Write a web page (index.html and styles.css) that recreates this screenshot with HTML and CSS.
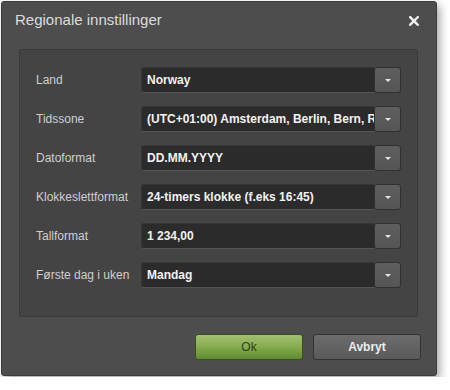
FILE: index.html
```html
<!DOCTYPE html>
<html lang="no">
<head>
    <meta charset="UTF-8">
    <title>Regionale innstillinger</title>
    <link rel="stylesheet" href="styles.css">
</head>
<body>
    <div class="dialog">
        <div class="dialog-header">
            <h1>Regionale innstillinger</h1>
            <svg class="close-btn" width="10" height="10" viewBox="0 0 10 10">
                <path d="M1.2 1.2 L8.8 8.8 M8.8 1.2 L1.2 8.8" stroke="#f0f0f0" stroke-width="2.4" stroke-linecap="square"/>
            </svg>
        </div>
        <div class="settings-panel">
            <div class="field-row">
                <label>Land</label>
                <div class="select"><span class="select-value">Norway</span><span class="select-btn"></span></div>
            </div>
            <div class="field-row">
                <label>Tidssone</label>
                <div class="select"><span class="select-value">(UTC+01:00) Amsterdam, Berlin, Bern, Roma, Stockholm, Wien</span><span class="select-btn"></span></div>
            </div>
            <div class="field-row">
                <label>Datoformat</label>
                <div class="select"><span class="select-value">DD.MM.YYYY</span><span class="select-btn"></span></div>
            </div>
            <div class="field-row">
                <label>Klokkeslettformat</label>
                <div class="select"><span class="select-value">24-timers klokke (f.eks 16:45)</span><span class="select-btn"></span></div>
            </div>
            <div class="field-row">
                <label>Tallformat</label>
                <div class="select"><span class="select-value">1 234,00</span><span class="select-btn"></span></div>
            </div>
            <div class="field-row">
                <label>Første dag i uken</label>
                <div class="select"><span class="select-value">Mandag</span><span class="select-btn"></span></div>
            </div>
        </div>
        <div class="dialog-footer">
            <button class="btn btn-ok">Ok</button>
            <button class="btn btn-cancel">Avbryt</button>
        </div>
    </div>
</body>
</html>
```

FILE: styles.css
```css
* {
    margin: 0;
    padding: 0;
    box-sizing: border-box;
}

body {
    font-family: "Liberation Sans", Arial, sans-serif;
    background-color: #ffffff;
    padding: 1px;
}

.dialog {
    width: 436px;
    height: 375px;
    background-color: #4d4d4d;
    border: 1px solid #3c3c3c;
    border-radius: 3px;
    box-shadow: 3px 4px 8px rgba(0, 0, 0, 0.35);
}

.dialog-header {
    height: 47px;
    display: flex;
    justify-content: space-between;
    align-items: flex-start;
    padding: 9px 17px 0 13px;
}

.dialog-header h1 {
    font-size: 15px;
    font-weight: normal;
    color: #dcdcdc;
}

.close-btn {
    margin-top: 5px;
}

.settings-panel {
    margin: 0 18px 0 17px;
    height: 268px;
    background-color: #444444;
    border: 1px solid #393939;
    border-radius: 2px;
    padding: 17px 16px 0 16px;
    display: flex;
    flex-direction: column;
    gap: 13px;
}

.field-row {
    display: flex;
    align-items: center;
    height: 26px;
}

.field-row label {
    width: 105px;
    flex-shrink: 0;
    font-size: 12px;
    color: #cfcfcf;
    white-space: nowrap;
}

.select {
    flex: 1;
    display: flex;
    height: 26px;
    min-width: 0;
}

.select-value {
    flex: 1;
    min-width: 0;
    background-color: #2b2b2b;
    border: 1px solid #363636;
    border-bottom-color: #555555;
    border-right: none;
    border-radius: 3px 0 0 3px;
    color: #f2f2f2;
    font-size: 12px;
    font-weight: bold;
    line-height: 24px;
    padding-left: 5px;
    white-space: nowrap;
    overflow: hidden;
}

.select-btn {
    width: 27px;
    flex-shrink: 0;
    background: linear-gradient(#5e5e5e, #555555);
    border: 1px solid #303030;
    border-radius: 3px;
    display: flex;
    align-items: center;
    justify-content: center;
}

.select-btn::after {
    content: "";
    border-left: 3px solid transparent;
    border-right: 3px solid transparent;
    border-top: 3px solid #e6e6e6;
}

.dialog-footer {
    display: flex;
    justify-content: flex-end;
    gap: 10px;
    padding: 17px 15px 0 0;
}

.btn {
    width: 108px;
    height: 26px;
    border-radius: 3px;
    font-family: "Liberation Sans", Arial, sans-serif;
    font-size: 12px;
}

.btn-ok {
    background: linear-gradient(#a4c06d, #86ab50 50%, #5f8c30);
    border: 1px solid #3a4f26;
    color: #2f3d21;
}

.btn-cancel {
    background: linear-gradient(#6c6c6c, #5a5a5a);
    border: 1px solid #333333;
    color: #ececec;
    font-weight: bold;
}
```
